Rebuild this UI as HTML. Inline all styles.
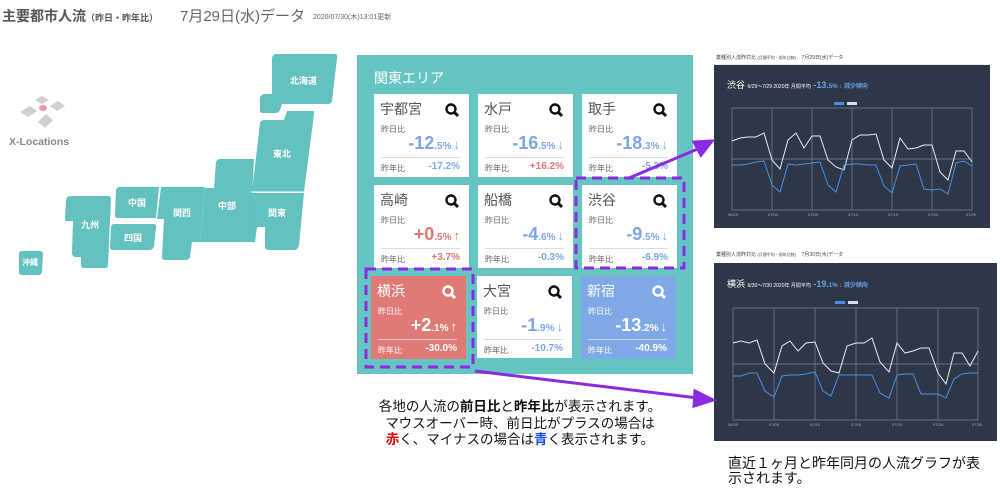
<!DOCTYPE html>
<html><head><meta charset="utf-8"><style>
*{margin:0;padding:0;box-sizing:border-box}
body{width:1000px;height:489px;background:#fff;position:relative;overflow:hidden;font-family:"Liberation Sans","Noto Sans CJK JP",sans-serif}
.a{position:absolute;white-space:nowrap}
.card{position:absolute;width:95px;height:83px;background:#fff;color:#555}
.card .n{position:absolute;left:6px;top:5px;font-size:14px;color:#555}
.card .s{position:absolute;right:9px;top:9px;width:15px;height:15px}
.card .l1{position:absolute;left:7px;top:30px;font-size:8px;color:#666}
.card .big{position:absolute;right:9px;top:39px;font-size:18px;font-weight:bold;color:#7ea6e6}
.card .big small{font-size:10px}
.card .big i{font-style:normal;font-size:13px;margin-left:2px}
.card .hr{position:absolute;left:7px;right:9px;top:63px;border-top:1.5px solid #ddd}
.card .l2{position:absolute;left:7px;top:69px;font-size:8px;color:#666}
.card .v2{position:absolute;right:9px;top:67px;font-size:10px;font-weight:bold;color:#7ea6e6}
.red .big,.red .v2{color:#e07674}
.fill .n,.fill .l1,.fill .l2,.fill .big,.fill .v2{color:#fff}
.fill .hr{border-color:rgba(255,255,255,.6)}
.rg{position:absolute;color:#fff;font-size:9px;font-weight:bold}
</style></head><body>
<div class="a" style="left:2px;top:6px;font-size:14px;font-weight:bold;color:#555">主要都市人流<span style="font-size:9px">（昨日・昨年比）</span></div>
<div class="a" style="left:180px;top:5px;font-size:15px;color:#666">7月29日(水)データ</div>
<div class="a" style="left:313px;top:12px;font-size:7px;color:#666">2020/07/30(木)13:01更新</div>

<svg class="a" style="left:0;top:0" width="350" height="290">
<g fill="#d0d0d0"><polygon points="35,100 42,96 49,100 42,104"/><polygon points="50,106 58,101 65,106 57,111"/><polygon points="20,112 30,106 37,111 28,117"/><polygon points="38,122 46,114 53,120 45,128"/></g>
<ellipse cx="43" cy="108" rx="4" ry="3" fill="#e89aa6"/>
<g fill="#63c1bf">
<path d="M276,54 H335 Q338,54 337,58 L332,101 Q331,104 328,104 H282 L280,110 Q279,113 275,113 H263 Q260,113 260,110 V98 Q261,94 265,94 H272 L272,58 Q273,54 276,54Z"/>
<path d="M287,111 H312 Q315,111 314,114 L304,192 H252 L260,123 Q261,120 264,120 H284 Z"/>
<path d="M251,193 H304 L299,245 Q298,250 294,250 H269 Q265,250 265,246 V227 H257 L255,242 H246 Z"/>
<path d="M220,159 H254 L250,242 H200 L205,188 H214 L216,162 Q217,159 220,159Z"/>
<path d="M161,187 H205 L200,242 H192 L190,257 Q189,260 186,260 H165 Q162,260 162,257 L164,219 H157 Z"/>
<path d="M119,187 H159 L156,218 H118 Q115,218 115,215 L116,190 Q117,187 119,187Z"/>
<path d="M114,224 H153 Q157,224 156,228 L154,246 Q153,250 149,250 H113 Q110,250 110,247 L111,228 Q111,224 114,224Z"/>
<path d="M70,196 H108 Q111,196 111,199 L108,265 Q108,268 105,268 H84 Q81,268 81,265 V257 H76 Q72,257 72,253 L73,221 H67 Q65,221 65,218 L66,200 Q67,196 70,196Z"/>
<path d="M22,251 H40 Q43,251 43,254 L42,272 Q41,275 38,275 H22 Q19,275 19,272 V254 Q19,251 22,251Z"/>
</g>
<g stroke="#fff" stroke-width="1" fill="none"><line x1="251" y1="192" x2="304" y2="192"/></g>
</svg>
<div class="a" style="left:9px;top:136px;font-size:10.5px;font-weight:bold;color:#888">X-Locations</div>
<div class="rg" style="left:290px;top:74px">北海道</div>
<div class="rg" style="left:273px;top:147px">東北</div>
<div class="rg" style="left:268px;top:206px">関東</div>
<div class="rg" style="left:218px;top:199px">中部</div>
<div class="rg" style="left:173px;top:206px">関西</div>
<div class="rg" style="left:128px;top:196px">中国</div>
<div class="rg" style="left:124px;top:231px">四国</div>
<div class="rg" style="left:81px;top:218px">九州</div>
<div class="rg" style="left:22px;top:257px;font-size:8px">沖縄</div>

<div class="a" style="left:357px;top:55px;width:336px;height:319px;background:#66c4c2"></div>
<div class="a" style="left:374px;top:68px;font-size:14px;color:#fff">関東エリア</div>

<svg width="0" height="0" style="position:absolute"><defs><g id="q"><circle cx="6" cy="6" r="4.5" fill="none" stroke-width="2.4"/><line x1="9.3" y1="9.3" x2="13" y2="13" stroke-width="3"/></g></defs></svg>

<div class="card" style="left:374px;top:94px"><div class="n">宇都宮</div><svg class="s"><use href="#q" stroke="#111"/></svg><div class="l1">昨日比</div><div class="big">-12<small>.5%</small><i>↓</i></div><div class="hr"></div><div class="l2">昨年比</div><div class="v2">-17.2%</div></div>
<div class="card" style="left:478px;top:94px"><div class="n">水戸</div><svg class="s"><use href="#q" stroke="#111"/></svg><div class="l1">昨日比</div><div class="big">-16<small>.5%</small><i>↓</i></div><div class="hr"></div><div class="l2">昨年比</div><div class="v2" style="color:#e07674">+16.2%</div></div>
<div class="card" style="left:582px;top:94px"><div class="n">取手</div><svg class="s"><use href="#q" stroke="#111"/></svg><div class="l1">昨日比</div><div class="big">-18<small>.3%</small><i>↓</i></div><div class="hr"></div><div class="l2">昨年比</div><div class="v2">-5.3%</div></div>
<div class="card red" style="left:374px;top:185px"><div class="n">高崎</div><svg class="s"><use href="#q" stroke="#111"/></svg><div class="l1">昨日比</div><div class="big">+0<small>.5%</small><i>↑</i></div><div class="hr"></div><div class="l2">昨年比</div><div class="v2">+3.7%</div></div>
<div class="card" style="left:478px;top:185px"><div class="n">船橋</div><svg class="s"><use href="#q" stroke="#111"/></svg><div class="l1">昨日比</div><div class="big">-4<small>.6%</small><i>↓</i></div><div class="hr"></div><div class="l2">昨年比</div><div class="v2">-0.3%</div></div>
<div class="card" style="left:582px;top:185px"><div class="n">渋谷</div><svg class="s"><use href="#q" stroke="#111"/></svg><div class="l1">昨日比</div><div class="big">-9<small>.5%</small><i>↓</i></div><div class="hr"></div><div class="l2">昨年比</div><div class="v2">-6.9%</div></div>
<div class="card fill" style="left:371px;top:276px;background:#e07a77"><div class="n">横浜</div><svg class="s"><use href="#q" stroke="#fff"/></svg><div class="l1">昨日比</div><div class="big">+2<small>.1%</small><i>↑</i></div><div class="hr"></div><div class="l2">昨年比</div><div class="v2">-30.0%</div></div>
<div class="card" style="left:477px;top:276px;height:82px"><div class="n">大宮</div><svg class="s"><use href="#q" stroke="#111"/></svg><div class="l1">昨日比</div><div class="big">-1<small>.9%</small><i>↓</i></div><div class="hr"></div><div class="l2">昨年比</div><div class="v2">-10.7%</div></div>
<div class="card fill" style="left:581px;top:276px;background:#7fa8e6"><div class="n">新宿</div><svg class="s"><use href="#q" stroke="#fff"/></svg><div class="l1">昨日比</div><div class="big">-13<small>.2%</small><i>↓</i></div><div class="hr"></div><div class="l2">昨年比</div><div class="v2">-40.9%</div></div>

<!-- screenshots -->
<div class="a" style="left:713px;top:51px;width:277px;height:14px;background:#fff;border-bottom:1px solid #eee"></div>
<div class="a" style="left:716px;top:54px;font-size:5px;color:#444">業種別人流昨対比 <span style="font-size:4px">(月間平均・前年比較)</span> &nbsp; &nbsp;7月29日(水)データ</div>
<div class="a" style="left:714px;top:65px;width:276px;height:163px;background:#2d3748"></div>
<div class="a" style="left:727px;top:78px;font-size:9px;color:#fff">渋谷 <span style="font-size:5px">6/29〜7/29 2020年 月間平均</span> <span style="color:#6aa3e8;font-weight:bold">-13.<small style="font-size:6px">5% ↓ 減少傾向</small></span></div>
<svg class="a" style="left:714px;top:65px" width="276" height="163">
<rect x="120" y="37" width="10" height="3" fill="#4a90e2"/><rect x="133" y="37" width="10" height="3" fill="#cfe0f5"/>
<g stroke="#7a8596" stroke-width="0.7"><line x1="18" y1="43" x2="258" y2="43"/><line x1="18" y1="94" x2="258" y2="94"/><line x1="18" y1="145" x2="258" y2="145"/>
<line x1="18" y1="43" x2="18" y2="145"/><line x1="58" y1="43" x2="58" y2="145"/><line x1="98" y1="43" x2="98" y2="145"/><line x1="138" y1="43" x2="138" y2="145"/><line x1="178" y1="43" x2="178" y2="145"/><line x1="218" y1="43" x2="218" y2="145"/><line x1="258" y1="43" x2="258" y2="145"/></g>
<polyline fill="none" stroke="#e6edf5" stroke-width="1" points="18,76 26,73 34,72 42,72 50,68 58,95 66,104 74,75 82,68 90,83 98,71 106,71 114,95 122,102 130,105 138,75 146,70 154,70 162,69 170,95 178,103 186,73 194,84 202,83 210,80 218,80 226,107 234,115 242,86 250,86 258,97"/>
<polyline fill="none" stroke="#4a90e2" stroke-width="1" points="18,100 26,100 34,99 42,97 50,96 58,120 66,127 74,99 82,100 90,99 98,98 106,97 114,120 122,127 130,100 138,99 146,99 154,100 162,100 170,121 178,128 186,101 194,100 202,99 210,124 218,125 226,124 234,129 242,98 250,96 258,101"/>
<g fill="#aab" font-size="4" font-family="Liberation Sans"><text x="14" y="151">06/29</text><text x="54" y="151">07/04</text><text x="94" y="151">07/09</text><text x="134" y="151">07/14</text><text x="174" y="151">07/19</text><text x="214" y="151">07/24</text><text x="252" y="151">07/29</text></g>
</svg>

<div class="a" style="left:713px;top:247px;width:284px;height:15px;background:#fff"></div>
<div class="a" style="left:716px;top:251px;font-size:5px;color:#444">業種別人流昨対比 <span style="font-size:4px">(月間平均・前年比較)</span> &nbsp; &nbsp;7月30日(木)データ</div>
<div class="a" style="left:714px;top:263px;width:283px;height:178px;background:#2d3748"></div>
<div class="a" style="left:727px;top:277px;font-size:9px;color:#fff">横浜 <span style="font-size:5px">6/30〜7/30 2020年 月間平均</span> <span style="color:#6aa3e8;font-weight:bold">-19.<small style="font-size:6px">1% ↓ 減少傾向</small></span></div>
<svg class="a" style="left:714px;top:263px" width="283" height="178">
<rect x="121" y="38" width="10" height="3" fill="#4a90e2"/><rect x="134" y="38" width="10" height="3" fill="#cfe0f5"/>
<g stroke="#7a8596" stroke-width="0.7"><line x1="19" y1="45" x2="264" y2="45"/><line x1="19" y1="101" x2="264" y2="101"/><line x1="19" y1="157" x2="264" y2="157"/>
<line x1="19" y1="45" x2="19" y2="157"/><line x1="60" y1="45" x2="60" y2="157"/><line x1="101" y1="45" x2="101" y2="157"/><line x1="142" y1="45" x2="142" y2="157"/><line x1="183" y1="45" x2="183" y2="157"/><line x1="224" y1="45" x2="224" y2="157"/><line x1="264" y1="45" x2="264" y2="157"/></g>
<polyline fill="none" stroke="#e6edf5" stroke-width="1" points="19,80 27,78 35,80 43,77 51,101 60,110 68,83 76,78 84,88 92,80 101,79 109,100 117,108 125,110 133,83 142,80 150,80 158,75 166,99 175,109 183,80 191,90 199,88 207,85 215,85 224,110 232,121 240,90 248,90 256,103 264,88"/>
<polyline fill="none" stroke="#4a90e2" stroke-width="1" points="19,113 27,113 35,110 43,110 51,128 60,134 68,113 76,112 84,112 92,111 101,109 109,128 117,133 125,112 133,112 142,112 150,112 158,112 166,130 175,135 183,112 191,111 199,111 207,131 215,131 224,131 232,135 240,116 248,111 256,110 264,110"/>
<g fill="#aab" font-size="4" font-family="Liberation Sans"><text x="14" y="163">06/30</text><text x="55" y="163">07/05</text><text x="96" y="163">07/10</text><text x="137" y="163">07/15</text><text x="178" y="163">07/20</text><text x="219" y="163">07/25</text><text x="258" y="163">07/30</text></g>
</svg>

<!-- dashed boxes & arrows -->
<svg class="a" style="left:0;top:0" width="1000" height="489">
<g fill="none" stroke="#8a2be2" stroke-width="3" stroke-dasharray="10,6">
<rect x="576" y="178" width="108" height="90"/>
<rect x="366" y="269" width="107" height="98"/>
</g>
<g stroke="#8a2be2" stroke-width="3" fill="#8a2be2">
<line x1="629" y1="178" x2="700" y2="148"/>
<polygon points="712,141 694,142 701,155"/>
<line x1="475" y1="371" x2="698" y2="398"/>
<polygon points="713,400 695,391 694,406"/>
</g>
</svg>

<div class="a" style="left:370px;top:399px;width:300px;text-align:center;font-size:13.5px;line-height:16.5px;color:#111;white-space:normal">各地の人流の<b>前日比</b>と<b>昨年比</b>が表示されます。<br>マウスオーバー時、前日比がプラスの場合は<br><b style="color:#e00">赤</b>く、マイナスの場合は<b style="color:#1a4ff0">青</b>く表示されます。</div>
<div class="a" style="left:728px;top:456px;font-size:14px;line-height:15px;color:#111">直近１ヶ月と昨年同月の人流グラフが表<br>示されます。</div>
</body></html>
